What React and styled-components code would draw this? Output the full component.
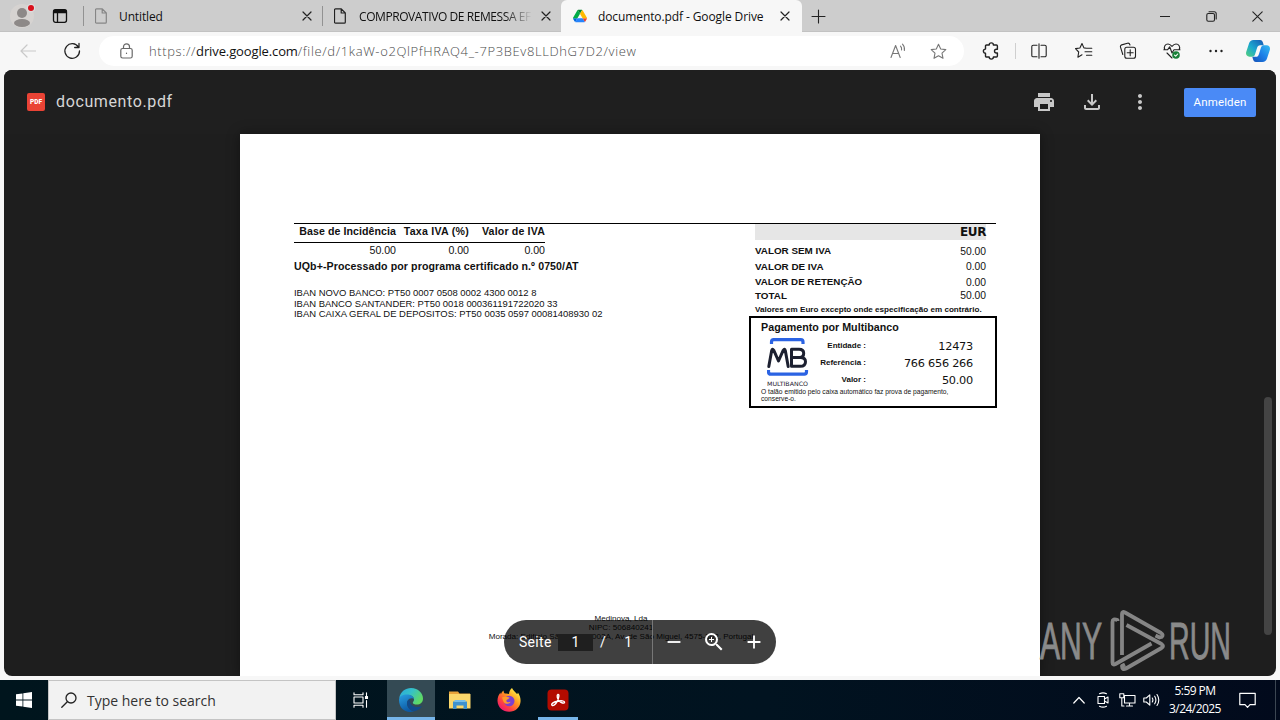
import React from 'react'
import styled, { createGlobalStyle } from 'styled-components'
import {
  MdAdd,
  MdMoreVert,
  MdOutlineFileDownload,
  MdPrint,
  MdRemove,
  MdZoomIn,
} from 'react-icons/md'

const GlobalStyle = createGlobalStyle`
  * { box-sizing: border-box; }
  body {
    margin: 0;
    overflow: hidden;
    font-family: 'Open Sans', 'Noto Sans', sans-serif;
  }
  svg { display: block; flex: none; }
`
const Screen = styled.div`
  display: flex;
  flex-direction: column;
  width: 1280px;
  height: 720px;
  background: #f7f7f7;
`

/* tab strip */
const TabStrip = styled.div`
  display: flex;
  height: 32px;
  background: #cdcdcd;
  border-bottom: 1px solid #c2c2c2;
`
const StripIcon = styled.div`
  position: relative;
  display: flex;
  align-items: center;
  justify-content: center;
  width: ${(p) => p.$width}px;
  height: 32px;
`
const Tab = styled.div`
  display: flex;
  align-items: center;
  width: ${(p) => (p.$active ? 241 : 239)}px;
  height: 32px;
  padding: 0 ${(p) => (p.$active ? 12 : 10)}px 0 12px;
  border-radius: ${(p) => (p.$active ? '6px 6px 0 0' : 0)};
  background: ${(p) => (p.$active ? '#f7f7f7' : 'transparent')};
`
const TabDivider = styled.div`
  align-self: center;
  width: 1px;
  height: 20px;
  margin-right: -1px;
  background: #929292;
`
const TabTitle = styled.div`
  flex: 1;
  margin: 0 9px 0 ${(p) => p.$gap}px;
  padding-top: 1px;
  overflow: hidden;
  white-space: nowrap;
  font-size: 12px;
  line-height: 18px;
  letter-spacing: ${(p) => p.$ls || 0}px;
  color: #101010;
  ${(p) =>
    p.$fade && 'mask-image: linear-gradient(90deg, #000 84%, transparent);'}
`
const WindowButtons = styled.div`
  display: flex;
  margin-left: auto;
`

/* address bar */
const Toolbar = styled.div`
  display: flex;
  align-items: center;
  height: 38px;
  background: #f7f7f7;
`
const ToolIcon = styled.div`
  display: flex;
  align-items: center;
  justify-content: center;
  width: ${(p) => p.$width || 44}px;
  height: 38px;
`
const AddressBar = styled.div`
  display: flex;
  align-items: center;
  width: 865px;
  height: 30px;
  padding: 0 6px 0 18px;
  margin-left: 11px;
  border-radius: 15px;
  background: #fff;
`
const Url = styled.div`
  flex: 1;
  margin-left: 14px;
  font-size: 13px;
  font-weight: 300;
  letter-spacing: 0.62px;
  white-space: nowrap;
  color: #4c4c4c;
`
const Host = styled.span`
  font-weight: 400;
  letter-spacing: -0.12px;
  color: #111;
`
const ToolDivider = styled.div`
  width: 1px;
  height: 16px;
  margin: 0 1px 0 -2px;
  background: #cfcfcf;
`

/* viewer */
const Viewer = styled.main`
  position: relative;
  display: flex;
  flex-direction: column;
  width: 1272px;
  height: 606px;
  margin: 0 4px;
  overflow: hidden;
  border-radius: 8px;
  background: #1e1e1e;
`
const ViewerHeader = styled.header`
  display: flex;
  align-items: center;
  height: 64px;
  padding: 0 20px 0 23px;
  background: #1f1f1f;
`
const PdfBadge = styled.div`
  width: 18px;
  height: 18px;
  border-radius: 2px;
  background: #ea4335;
  color: #fff;
  font: 900 6.5px/18px Roboto, sans-serif;
  text-align: center;
`
const FileName = styled.div`
  margin-left: 11px;
  font: 400 16px/24px Roboto, sans-serif;
  letter-spacing: 0.62px;
  color: #d6d6d6;
`
const HeaderActions = styled.div`
  display: flex;
  align-items: center;
  margin-left: auto;
  color: #c8c8c8;
`
const Action = styled.div`
  display: flex;
  justify-content: center;
  width: 48px;
`
const SignIn = styled.button`
  width: 72px;
  height: 29px;
  padding: 0;
  margin-left: 20px;
  border: 0;
  border-radius: 2px;
  background: #4a8af6;
  color: #fff;
  font: 400 11.5px Roboto, sans-serif;
  letter-spacing: 0.15px;
`
const Page = styled.article`
  display: flex;
  flex-direction: column;
  width: 800px;
  height: 542px;
  margin-left: 236px;
  padding: 89px 43px 0 54px;
  background: #fff;
  box-shadow: 0 0 12px rgba(0, 0, 0, 0.4);
  color: #111;
  font-family: 'Liberation Sans', Arial, sans-serif;
`
const Sheet = styled.div`
  display: flex;
  justify-content: space-between;
  width: 702px;
  height: 389px;
  border-top: 1px solid #000;
`
const Line = styled.div`
  height: ${(p) => p.$height}px;
  line-height: ${(p) => p.$height}px;
  font-size: ${(p) => p.$size}px;
  font-weight: ${(p) => (p.$bold ? 700 : 400)};
  letter-spacing: ${(p) => p.$ls || 0}px;
  white-space: nowrap;
`
const TaxTable = styled.div`
  display: grid;
  grid-template-columns: 102px 73px 76px;
  width: 251px;
  text-align: right;
`
const TaxHead = styled(Line)`
  line-height: 15px;
  border-bottom: 1px solid #000;
`
const Gap = styled.div`
  height: ${(p) => p.$height}px;
`
const Totals = styled.section`
  width: 247px;
`
const Currency = styled.div`
  width: 231px;
  height: 16px;
  margin-left: 6px;
  background: #e6e6e6;
  text-align: right;
  font: 700 12px/16px 'DejaVu Sans', sans-serif;
  letter-spacing: -0.4px;
`
const TotalRow = styled.div`
  display: flex;
  align-items: ${(p) => p.$align || 'center'};
  justify-content: space-between;
  width: 231px;
  height: ${(p) => p.$height}px;
  margin-left: 6px;
`
const Payment = styled.div`
  display: flex;
  flex-direction: column;
  width: 248px;
  height: 92px;
  padding: 2px 22px 0 10px;
  border: 2px solid #000;
`
const PaymentBody = styled.div`
  display: flex;
  height: 54px;
`
const LogoSlot = styled.div`
  width: 48px;
  padding: 3px 0 0 6px;
`
const PaymentFields = styled.div`
  flex: 1;
  padding-top: 3px;
`
const Field = styled.div`
  display: flex;
  align-items: center;
  height: 17px;
`
const FieldLabel = styled.span`
  width: 57px;
  text-align: right;
  white-space: nowrap;
  font-size: 8px;
  font-weight: 700;
`
const FieldValue = styled.span`
  flex: 1;
  padding-top: 1px;
  text-align: right;
  font-family: 'DejaVu Sans', sans-serif;
  font-size: 11.3px;
  letter-spacing: -0.25px;
`
const Company = styled.footer`
  width: 320px;
  margin: 2px 0 0 167px;
  text-align: center;
  font-size: 8.1px;
  line-height: 9px;
  white-space: nowrap;
`
const Pager = styled.div`
  position: absolute;
  left: 500px;
  top: 550px;
  display: flex;
  align-items: center;
  width: 272px;
  height: 44px;
  border-radius: 22px;
  background: rgba(0, 0, 0, 0.75);
  color: #fff;
  font: 400 14px Roboto, sans-serif;
`
const PageLabel = styled.span`
  width: 54px;
  padding-left: 15px;
  letter-spacing: 0.3px;
`
const PageInput = styled.span`
  width: 35px;
  height: 17px;
  line-height: 17px;
  text-align: center;
  background: #1f1f1f;
`
const PageTotal = styled.span`
  display: flex;
  align-items: center;
  justify-content: space-between;
  width: 60px;
  height: 44px;
  padding: 0 20px 0 7px;
  border-right: 1px solid #777;
`
const PagerButtons = styled.div`
  display: flex;
  align-items: center;
  margin-left: 1px;
`
const PagerButton = styled.div`
  display: flex;
  justify-content: center;
  width: 40px;
`
const Scrollbar = styled.div`
  position: absolute;
  right: 4px;
  top: 327px;
  width: 8px;
  height: 238px;
  border-radius: 4px;
  background: #444;
`
const Watermark = styled.svg`
  position: absolute;
  left: 1034px;
  top: 538px;
  overflow: visible;
`

/* taskbar */
const Taskbar = styled.footer`
  display: flex;
  height: 40px;
  margin-top: 4px;
  background: linear-gradient(90deg, #00151d 0%, #011320 60%, #020a1c 100%);
`
const TaskItem = styled.div`
  display: flex;
  align-items: center;
  justify-content: center;
  width: ${(p) => p.$width}px;
  height: 40px;
  background: ${(p) => (p.$active ? '#344a54' : 'transparent')};
  ${(p) => p.$open && 'box-shadow: inset 0 -3px #76b5ea;'}
`
const Search = styled.div`
  display: flex;
  align-items: center;
  width: 288px;
  height: 40px;
  padding-left: 12px;
  border: 1px solid #c4c4c4;
  background: #f2f2f2;
  color: #333;
  font-size: 14px;
`
const SearchText = styled.span`
  margin-left: 10px;
`
const Tray = styled.div`
  display: flex;
  margin-left: auto;
  padding-right: 4px;
`
const Clock = styled.div`
  width: 64px;
  padding-top: 2px;
  text-align: center;
  color: #fff;
  font-size: 12px;
  line-height: 18px;
  letter-spacing: -0.55px;
  white-space: nowrap;
`
const ShowDesktop = styled.div`
  width: 1px;
  height: 40px;
  margin-left: 8px;
  background: #3c4652;
`

const Icon = ({ w = 18, h = w, c = '#222', sw = 1.1, children }) => (
  <svg
    width={w}
    height={h}
    viewBox={`0 0 ${w} ${h}`}
    fill='none'
    stroke={c}
    strokeWidth={sw}
    strokeLinecap='round'
    strokeLinejoin='round'
  >
    {children}
  </svg>
)

const FileIcon = ({ color }) => (
  <Icon w={12} h={16} c={color} sw={1.2}>
    <path d='M1.5.8h5.8L11.3 5v9.2a1 1 0 0 1-1 1H1.5a1 1 0 0 1-1-1V1.800a1 1 0 0 1 1-1ZM7.200.8V5h4.100' />
  </Icon>
)

const Close = () => (
  <Icon w={10} sw={1.2}>
    <path d='m1 1 8 8M9 1 1 9' />
  </Icon>
)

const DriveIcon = () => (
  <svg width='14' height='14' viewBox='0 0 87.3 78'>
    <path fill='#0066da' d='m6.600 66.850 3.850 6.650c.8 1.400 1.950 2.500 3.300 3.300l13.750-23.800h-27.500c0 1.550.4 3.100 1.200 4.500z' />
    <path fill='#00ac47' d='m43.650 25-13.750-23.800c-1.350.8-2.500 1.900-3.300 3.300l-25.400 44a9.060 9.060 0 0 0-1.200 4.500h27.500z' />
    <path fill='#ea4335' d='m73.550 76.800c1.350-.8 2.500-1.900 3.300-3.300l1.600-2.750 7.650-13.250c.8-1.400 1.200-2.950 1.200-4.500h-27.500l5.850 11.500z' />
    <path fill='#00832d' d='m43.650 25 13.750-23.800c-1.350-.8-2.900-1.200-4.500-1.200h-18.500c-1.600 0-3.150.45-4.500 1.200z' />
    <path fill='#2684fc' d='m59.800 53h-32.300l-13.750 23.800c1.350.8 2.900 1.200 4.500 1.200h50.800c1.600 0 3.150-.45 4.500-1.200z' />
    <path fill='#ffba00' d='m73.400 26.500-12.700-22c-.8-1.400-1.950-2.500-3.300-3.300l-13.750 23.800 16.150 28h27.450c0-1.550-.4-3.100-1.200-4.500z' />
  </svg>
)

const Copilot = () => (
  <svg width='24' height='22' viewBox='0 0 24 22'>
    <defs>
      <linearGradient id='cpa' x1='0' y1='1' x2='1' y2='0'>
        <stop offset='0' stopColor='#55d17a' />
        <stop offset='.45' stopColor='#1aa8cf' />
        <stop offset='1' stopColor='#1656b4' />
      </linearGradient>
      <linearGradient id='cpb' x1='0' y1='1' x2='1' y2='0'>
        <stop offset='0' stopColor='#1550b5' />
        <stop offset='.5' stopColor='#1c7fe8' />
        <stop offset='1' stopColor='#35bdf0' />
      </linearGradient>
    </defs>
    <path fill='url(#cpa)' d='M7.500 0h6.500c1.800 0 2.500 1.200 3 2.800l.7 2.400h-3.500c-1.800 0-2.600 1-3.100 2.600L9 14.500c-.6 1.700-1.500 2.200-3.200 2.200H3.400C.7 16.700-.5 14.500.2 12L3 3.500C3.700 1.200 5.200 0 7.500 0Z' />
    <path fill='url(#cpb)' d='M16.500 22H10c-1.800 0-2.500-1.200-3-2.800l-.7-2.400h3.500c1.800 0 2.600-1 3.100-2.600L15 7.500c.6-1.700 1.500-2.200 3.200-2.200h2.400c2.700 0 3.900 2.200 3.200 4.700L21 18.500c-.7 2.300-2.200 3.500-4.500 3.500Z' />
  </svg>
)

const MultibancoLogo = () => (
  <svg width='42' height='50' viewBox='0 0 42 50'>
    <g fill='none' stroke='#2b63e3' strokeWidth='3.200'>
      <path d='M4.500 7V5Q4.500 2.600 6.700 2.600h27.100Q36 2.600 36 5V7' />
      <path d='M1.500 33v1.800q0 2.400 2.200 2.400h33.600q2.200 0 2.200-2.400V33' />
    </g>
    <g fill='none' stroke='#1c2030' strokeWidth='3' strokeLinejoin='round' strokeLinecap='round'>
      <path d='M1.800 29.500 4.700 13.500q.6-2.500 2-.3l4.800 10.800 4.800-10.800q1.400-2.200 2 .3L21.200 29.500' />
      <path d='M24.500 12.300v17h8.700q5.300 0 5.300-4.600 0-4.300-5.100-4.300h-8.900 8.200q4-.1 4-4.100 0-4-4.700-4Z' />
    </g>
    <text x='0' y='48.500' fontSize='6' textLength='41' lengthAdjust='spacingAndGlyphs' fontFamily='DejaVu Sans' fill='#1c2030'>MULTIBANCO</text>
  </svg>
)

const EdgeLogo = () => (
  <svg width='26' height='26' viewBox='0 0 26 26'>
    <defs>
      <linearGradient id='ega' x1='0' y1='0' x2='1' y2='.5'>
        <stop offset='0' stopColor='#2aa8dc' />
        <stop offset='.5' stopColor='#35c1c9' />
        <stop offset='1' stopColor='#5fd964' />
      </linearGradient>
      <linearGradient id='egb' x1='0' y1='0' x2='.4' y2='1'>
        <stop offset='0' stopColor='#2aa0e2' />
        <stop offset='1' stopColor='#0c59a4' />
      </linearGradient>
    </defs>
    <path fill='url(#ega)' d='M1.200 11C2.500 4.500 7.500 1 13 1c7.500 0 12 5.500 12 10.500 0 4-3 6-6 6-2.500 0-4.200-.8-4.200-1.800 0-.8 1.200-1.300 1.200-3.200 0-2.600-2.600-4.500-6-4.500-4 0-7.400 1.500-8.800 3Z' />
    <path fill='url(#egb)' d='M1 13C1 9.200 4.800 7.500 9 7.500c3.600 0 6.800 1.900 7 4.500-1-1-5-1.500-6.500 2-1.800 4.600 2 9.500 6.800 10.300C8 27 1 21.500 1 13Z' />
    <path fill='#114a8b' d='M9.500 14c-1.800 4.500 2 9.500 6.800 10.300 3.200-.6 6-2.600 7.600-5.300-5.400 2.800-12.800 0-12-6-.9 0-1.900.4-2.400 1Z' />
  </svg>
)

const Explorer = () => (
  <svg width='22' height='20' viewBox='0 0 22 20'>
    <path fill='#e8a33a' d='M0 1.500h9l1.500 2H21V6H0Z' />
    <path fill='#fbd76b' d='M0 4h21.500v14.500H0Z' />
    <path fill='#3f92cf' d='M4 11.500h14v7.500h-3.500v-3.500h-7V19H4Z' />
    <path fill='#79bfe9' d='M5.500 10h11v2h-11Z' />
  </svg>
)

const Firefox = () => (
  <svg width='24' height='24' viewBox='0 0 24 24'>
    <defs>
      <linearGradient id='ffa' x1='.85' y1='.1' x2='.2' y2='.9'>
        <stop offset='0' stopColor='#fff04a' />
        <stop offset='.4' stopColor='#ff9a20' />
        <stop offset='.75' stopColor='#ff4340' />
        <stop offset='1' stopColor='#f01c6b' />
      </linearGradient>
    </defs>
    <path fill='url(#ffa)' d='M15 0c.8 2.400 3.200 3.600 5 6 .8-.5.8-1 .9-1.500C23 7.500 23.800 10.500 23.500 14c-.6 5.700-5.300 9.800-11.300 9.800C5.600 23.800.8 19.200.5 13c-.1-3.600 1.200-6.300 3-8.500 0 .8.100 1.300.4 1.800C4.400 4.700 5.400 3.300 6.600 2.500c0 1.300.4 2.200 1.200 3 1.700-.2 3.200 0 4.200.5.200-2.300 1-4.500 3-6Z' />
    <circle cx='12.200' cy='13' r='5.300' fill='#7b3fd1' />
    <path fill='#ff9b28' d='M5 9.500c2-1.300 5-.7 7.600 0-.4 1.800-3.100 1.500-3.300 3.200.2 1.500 2.400 2 4.300 1.100-.9 2.400-6.100 3.200-7.400-.8Z' />
  </svg>
)

const Acrobat = () => (
  <svg width='22' height='22' viewBox='0 0 22 22'>
    <rect x='.5' y='.5' width='21' height='21' rx='4' fill='#b30b00' />
    <path
      fill='none'
      stroke='#fff'
      strokeWidth='1.400'
      d='M5 16.200c-1.200-1.200 1.200-3 5.200-3.900 4-.9 7.400-.5 7.300 1-.2 1.600-3.500.7-5.500-1.600-1.700-2-2.500-5.700-1.100-6.300 1.600-.4 1.100 3.700-.8 7.200-1.600 2.900-3.900 4.700-5.100 3.600Z'
    />
  </svg>
)

function App() {
  return (
    <Screen>
      <GlobalStyle />
      <TabStrip>
        <StripIcon $width={44}>
          <svg width='26' height='26' viewBox='0 0 26 26'>
            <circle cx='13' cy='13' r='12' fill='#d6d3d1' />
            <circle cx='13' cy='10' r='5' fill='#8d8988' />
            <ellipse cx='13' cy='20' rx='8' ry='4' fill='#8d8988' />
            <circle cx='22' cy='5' r='4.300' fill='#ddd' />
            <circle cx='22' cy='5' r='3' fill='#d9101c' />
          </svg>
        </StripIcon>
        <StripIcon $width={32}>
          <Icon w={16} h={16} c='#111' sw={1.3}>
            <rect x='1.500' y='1.700' width='13' height='12.600' rx='2' />
            <path d='M2 2.500h12v2H2zM5.500 5v9' fill='#111' />
          </Icon>
        </StripIcon>
        <StripIcon $width={7} />
        <TabDivider />
        <Tab>
          <FileIcon color='#868686' />
          <TabTitle $gap={12} $ls={-0.12}>Untitled</TabTitle>
          <Close />
        </Tab>
        <TabDivider />
        <Tab>
          <FileIcon color='#222' />
          <TabTitle $gap={13} $ls={-0.42} $fade>COMPROVATIVO DE REMESSA EF</TabTitle>
          <Close />
        </Tab>
        <Tab $active>
          <DriveIcon />
          <TabTitle $gap={11} $ls={-0.1}>documento.pdf - Google Drive</TabTitle>
          <Close />
        </Tab>
        <StripIcon $width={32}>
          <Icon w={15} c='#222'>
            <path d='M7.500 1v13M1 7.500h13' />
          </Icon>
        </StripIcon>
        <WindowButtons>
          <StripIcon $width={46}>
            <Icon w={10}>
              <path d='M0 5.500h10' />
            </Icon>
          </StripIcon>
          <StripIcon $width={46}>
            <Icon w={11}>
              <rect x='.8' y='2.500' width='7.700' height='7.700' rx='1.500' />
              <path d='M3 .7h5.200a2 2 0 0 1 2 2V8' />
            </Icon>
          </StripIcon>
          <StripIcon $width={46}>
            <Icon w={11}>
              <path d='m.8.8 9.400 9.400M10.200.8.8 10.200' />
            </Icon>
          </StripIcon>
        </WindowButtons>
      </TabStrip>

      <Toolbar>
        <ToolIcon $width={56}>
          <Icon w={16} c='#c9c9c9' sw={1.2}>
            <path d='M15.500 8H1M7 2 1 8l6 6' />
          </Icon>
        </ToolIcon>
        <ToolIcon $width={32}>
          <Icon w={18} sw={1.3}>
            <path d='M15.500 5.300A7.300 7.300 0 1 0 16.500 9M16 1.500v4h-4.300' />
          </Icon>
        </ToolIcon>
        <AddressBar>
          <ToolIcon $width={18}>
            <Icon w={13} h={16} c='#686868' sw={1.2}>
              <rect x='.8' y='5.500' width='11.400' height='9.500' rx='1.800' />
              <path d='M3.500 5.500V3.800a3 3 0 0 1 6 0v1.700M6.500 10v.4' />
            </Icon>
          </ToolIcon>
          <Url>
            https://<Host>drive.google.com</Host>/file/d/1kaW-o2QlPfHRAQ4_-7P3BEv8LLDhG7D2/view
          </Url>
          <ToolIcon $width={40}>
            <Icon w={16} c='#777'>
              <path d='m1 14.500 4.600-12 4.600 12M2.700 10.500h5.900M10.500 3.200c1 1 1.300 2.300 1.100 3.800M12.500 1.200c1.800 1.800 2.200 4 1.900 6.300' />
            </Icon>
          </ToolIcon>
          <ToolIcon $width={40}>
            <Icon w={17} c='#777'>
              <path d='m8.500 1.300 2.200 4.700 5.100.6-3.800 3.500 1 5.200-4.500-2.600-4.500 2.600 1-5.200L1.200 6.600l5.100-.6Z' />
            </Icon>
          </ToolIcon>
        </AddressBar>
        <ToolIcon $width={53}>
          <Icon w={18} sw={1.4}>
            <path d='M4.500 3h2.700a2.100 2.100 0 0 1 4.200 0h3a1 1 0 0 1 1 1v3.200h-1a1.900 1.900 0 0 0 0 3.800h1v3a1 1 0 0 1-1 1h-3a2.100 2.100 0 0 1-4.200 0H4.500a1 1 0 0 1-1-1v-2.700a2.100 2.100 0 0 1 0-4.200V4a1 1 0 0 1 1-1Z' />
          </Icon>
        </ToolIcon>
        <ToolDivider />
        <ToolIcon>
          <Icon w={16}>
            <path d='M6 2.200H2.200a1.400 1.400 0 0 0-1.400 1.400v8.800a1.400 1.400 0 0 0 1.400 1.400H6M10 2.200h3.800a1.400 1.400 0 0 1 1.400 1.400v8.800a1.400 1.400 0 0 1-1.400 1.400H10M8 .7v14.600' />
          </Icon>
        </ToolIcon>
        <ToolIcon $width={45}>
          <Icon w={18}>
            <path d='m11.500 6.200-2.600-.3L7 1.500 4.900 6l-4.400.6L3.700 10l-.8 5.200L7 12.800M11.500 6.200h5.300M10 9.700h6.800M11.500 13.200h5.300' />
          </Icon>
        </ToolIcon>
        <ToolIcon>
          <Icon w={18}>
            <rect x='5.800' y='5.300' width='10.700' height='11' rx='2' />
            <path d='M11.200 7.800v6M8.200 10.800h6M3.800 12.500 1.500 5.200a1.800 1.800 0 0 1 1.200-2.300L8.500 1.200c1.200-.3 2 .2 2.500 1.800' />
          </Icon>
        </ToolIcon>
        <ToolIcon>
          <Icon w={18}>
            <path d='M1.800 7.500C.5 4.600 2.200 2 5 2c1.800 0 3 1.200 4 2.400C10 3.200 11.200 2 13 2c2.800 0 4.500 2.600 3.200 5.500M.8 7.800h3.700L6.700 4.800 9 11l2-3.200h6M4 11l5 5' />
            <circle cx='13' cy='13' r='3.800' fill='#188038' stroke='none' />
            <path stroke='#fff' d='m11.500 13.100 1.200 1.100 2-2.200' />
          </Icon>
        </ToolIcon>
        <ToolIcon>
          <Icon w={16} c='none'>
            <g fill='#222'>
              <circle cx='2.500' cy='8' r='1.200' />
              <circle cx='8' cy='8' r='1.200' />
              <circle cx='13.500' cy='8' r='1.200' />
            </g>
          </Icon>
        </ToolIcon>
        <ToolIcon $width={40}>
          <Copilot />
        </ToolIcon>
      </Toolbar>

      <Viewer>
        <ViewerHeader>
          <PdfBadge>PDF</PdfBadge>
          <FileName>documento.pdf</FileName>
          <HeaderActions>
            <Action><MdPrint size={24} /></Action>
            <Action><MdOutlineFileDownload size={24} /></Action>
            <Action><MdMoreVert size={24} /></Action>
            <SignIn>Anmelden</SignIn>
          </HeaderActions>
        </ViewerHeader>

        <Page>
          <Sheet>
            <div>
              <TaxTable>
                <TaxHead $height={19} $size={10.6} $ls={0.07} $bold>Base de Incidência</TaxHead>
                <TaxHead $height={19} $size={10.6} $ls={0.25} $bold>Taxa IVA (%)</TaxHead>
                <TaxHead $height={19} $size={10.6} $ls={0.17} $bold>Valor de IVA</TaxHead>
                <Line $height={15} $size={10.6}>50.00</Line>
                <Line $height={15} $size={10.6}>0.00</Line>
                <Line $height={15} $size={10.6}>0.00</Line>
              </TaxTable>
              <Line $height={17} $size={10.6} $ls={0.1} $bold>
                UQb+-Processado por programa certificado n.º 0750/AT
              </Line>
              <Gap $height={13} />
              <Line $height={10.5} $size={9.45}>IBAN NOVO BANCO: PT50 0007 0508 0002 4300 0012 8</Line>
              <Line $height={10.5} $size={9.45}>IBAN BANCO SANTANDER: PT50 0018 000361191722020 33</Line>
              <Line $height={10.5} $size={9.45}>IBAN CAIXA GERAL DE DEPOSITOS: PT50 0035 0597 00081408930 02</Line>
            </div>
            <Totals>
              <Currency>EUR</Currency>
              <Gap $height={4} />
              <TotalRow $height={15} $align='flex-end'>
                <Line $height={17} $size={9.85} $bold>VALOR SEM IVA</Line>
                <Line $height={15} $size={10.3}>50.00</Line>
              </TotalRow>
              <TotalRow $height={16} $align='flex-start'>
                <Line $height={15} $size={9.85} $bold>VALOR DE IVA</Line>
                <Line $height={15} $size={10.3}>0.00</Line>
              </TotalRow>
              <TotalRow $height={14} $align='flex-start'>
                <Line $height={14} $size={9.75} $bold>VALOR DE RETENÇÃO</Line>
                <Line $height={16} $size={10.3}>0.00</Line>
              </TotalRow>
              <TotalRow $height={13}>
                <Line $height={13} $size={9.85} $bold>TOTAL</Line>
                <Line $height={13} $size={10.3}>50.00</Line>
              </TotalRow>
              <TotalRow $height={14} $align='flex-end'>
                <Line $height={12} $size={8.1} $bold>
                  Valores em Euro excepto onde especificação em contrário.
                </Line>
              </TotalRow>
              <Payment>
                <Line $height={14} $size={10.7} $ls={0.03} $bold>Pagamento por Multibanco</Line>
                <PaymentBody>
                  <LogoSlot>
                    <MultibancoLogo />
                  </LogoSlot>
                  <PaymentFields>
                    <Field>
                      <FieldLabel>Entidade :</FieldLabel>
                      <FieldValue>12473</FieldValue>
                    </Field>
                    <Field>
                      <FieldLabel>Referência :</FieldLabel>
                      <FieldValue>766 656 266</FieldValue>
                    </Field>
                    <Field>
                      <FieldLabel>Valor :</FieldLabel>
                      <FieldValue>50.00</FieldValue>
                    </Field>
                  </PaymentFields>
                </PaymentBody>
                <Line $height={7} $size={6.7}>O talão emitido pelo caixa automático faz prova de pagamento,</Line>
                <Line $height={7} $size={6.7}>conserve-o.</Line>
              </Payment>
            </Totals>
          </Sheet>
          <Company>
            Medinova, Lda
            <br />
            NIPC: 506840241
            <br />
            Morada: Edifício São Miguel 002A, Av. de São Miguel, 4575-302, Portugal
          </Company>
        </Page>

        <Pager>
          <PageLabel>Seite</PageLabel>
          <PageInput>1</PageInput>
          <PageTotal>
            <span>/</span>
            <span>1</span>
          </PageTotal>
          <PagerButtons>
            <PagerButton><MdRemove size={22} /></PagerButton>
            <PagerButton><MdZoomIn size={24} /></PagerButton>
            <PagerButton><MdAdd size={22} /></PagerButton>
          </PagerButtons>
        </Pager>
        <Scrollbar />
        <Watermark width='196' height='66' viewBox='0 0 196 66'>
          <g fill='#8a8a8a' stroke='#8a8a8a' strokeWidth='.9' fontFamily='Liberation Sans' fontSize='52'>
            <text x='2' y='51' textLength='62' lengthAdjust='spacingAndGlyphs'>ANY</text>
            <text x='131' y='51' textLength='62' lengthAdjust='spacingAndGlyphs'>RUN</text>
          </g>
          <g fill='none' stroke='#858585' strokeWidth='3.800' strokeLinejoin='round'>
            <path d='M84 47V6q0-3 3-1.500l36 20.500q3 2 .5 4l-2 .5-4-2' />
            <path d='M79.500 13v-1q-5-2-5 2v40.500q0 3 3 1.500l36-20.500' />
            <path d='m88.500 17 35 19q3 2 0 4L88 60.500q-4 2-4-2.500l3-1.500' />
          </g>
        </Watermark>
      </Viewer>

      <Taskbar>
        <TaskItem $width={48}>
          <svg width='16' height='16' viewBox='0 0 16 16' fill='#fff'>
            <path d='M0 2.300 6.500 1.400v6.200H0ZM7.300 1.300 16 0v7.600H7.300ZM0 8.400h6.500v6.200L0 13.700ZM7.300 8.400H16V16l-8.700-1.300Z' />
          </svg>
        </TaskItem>
        <Search>
          <Icon w={16} c='#222' sw={1.3}>
            <circle cx='10' cy='6' r='5' />
            <path d='M6.300 9.700.8 15.200' />
          </Icon>
          <SearchText>Type here to search</SearchText>
        </Search>
        <TaskItem $width={51}>
          <Icon w={17} h={16} c='#fff'>
            <path d='M1 .7v2h9v-2M1 15.300v-2h9v2M1 5h9v6H1zM13.500.7v3M13.500 8.500v6.800' />
            <path d='M12.500 4.500h2v2h-2z' fill='#fff' />
          </Icon>
        </TaskItem>
        <TaskItem $width={48} $active $open>
          <EdgeLogo />
        </TaskItem>
        <TaskItem $width={50}>
          <Explorer />
        </TaskItem>
        <TaskItem $width={48}>
          <Firefox />
        </TaskItem>
        <TaskItem $width={5} />
        <TaskItem $width={40} $open>
          <Acrobat />
        </TaskItem>
        <Tray>
          <TaskItem $width={24}>
            <Icon w={12} h={8} c='#fff' sw={1.2}>
              <path d='m.8 7 5.200-5.500L11.200 7' />
            </Icon>
          </TaskItem>
          <TaskItem $width={24}>
            <Icon w={12} h={16} c='#fff'>
              <path d='M2.500 1.800q3.500-1.800 7 0M2.500 14.200q3.500 1.800 7 0M1 4.500h6.500v7H1zM7.500 7 11 5v6L7.500 9' />
            </Icon>
          </TaskItem>
          <TaskItem $width={24}>
            <Icon w={17} h={14} c='#fff'>
              <path d='M5.500 2.500h10.500v7.500H5.500zM10.500 10v3M7.500 13h6M.8.8h4v4h-4zM2.800 4.800V13H5' />
            </Icon>
          </TaskItem>
          <TaskItem $width={24}>
            <Icon w={17} h={14} c='#fff'>
              <path d='M.8 5v4h2.500l3.500 3.200V1.800L3.300 5ZM9.300 5q1.200 2 0 4M11.700 3.200q2.400 3.800 0 7.600M14 1.500q3.600 5.500 0 11' />
            </Icon>
          </TaskItem>
          <Clock>
            5:59 PM
            <br />
            3/24/2025
          </Clock>
          <TaskItem $width={40}>
            <Icon w={17} h={17} c='#fff' sw={1.2}>
              <path d='M.8 1.300h15.400v11.400H11l-2.500 2.700L6 12.700H.8z' />
            </Icon>
          </TaskItem>
          <ShowDesktop />
        </Tray>
      </Taskbar>
    </Screen>
  )
}

export default App
